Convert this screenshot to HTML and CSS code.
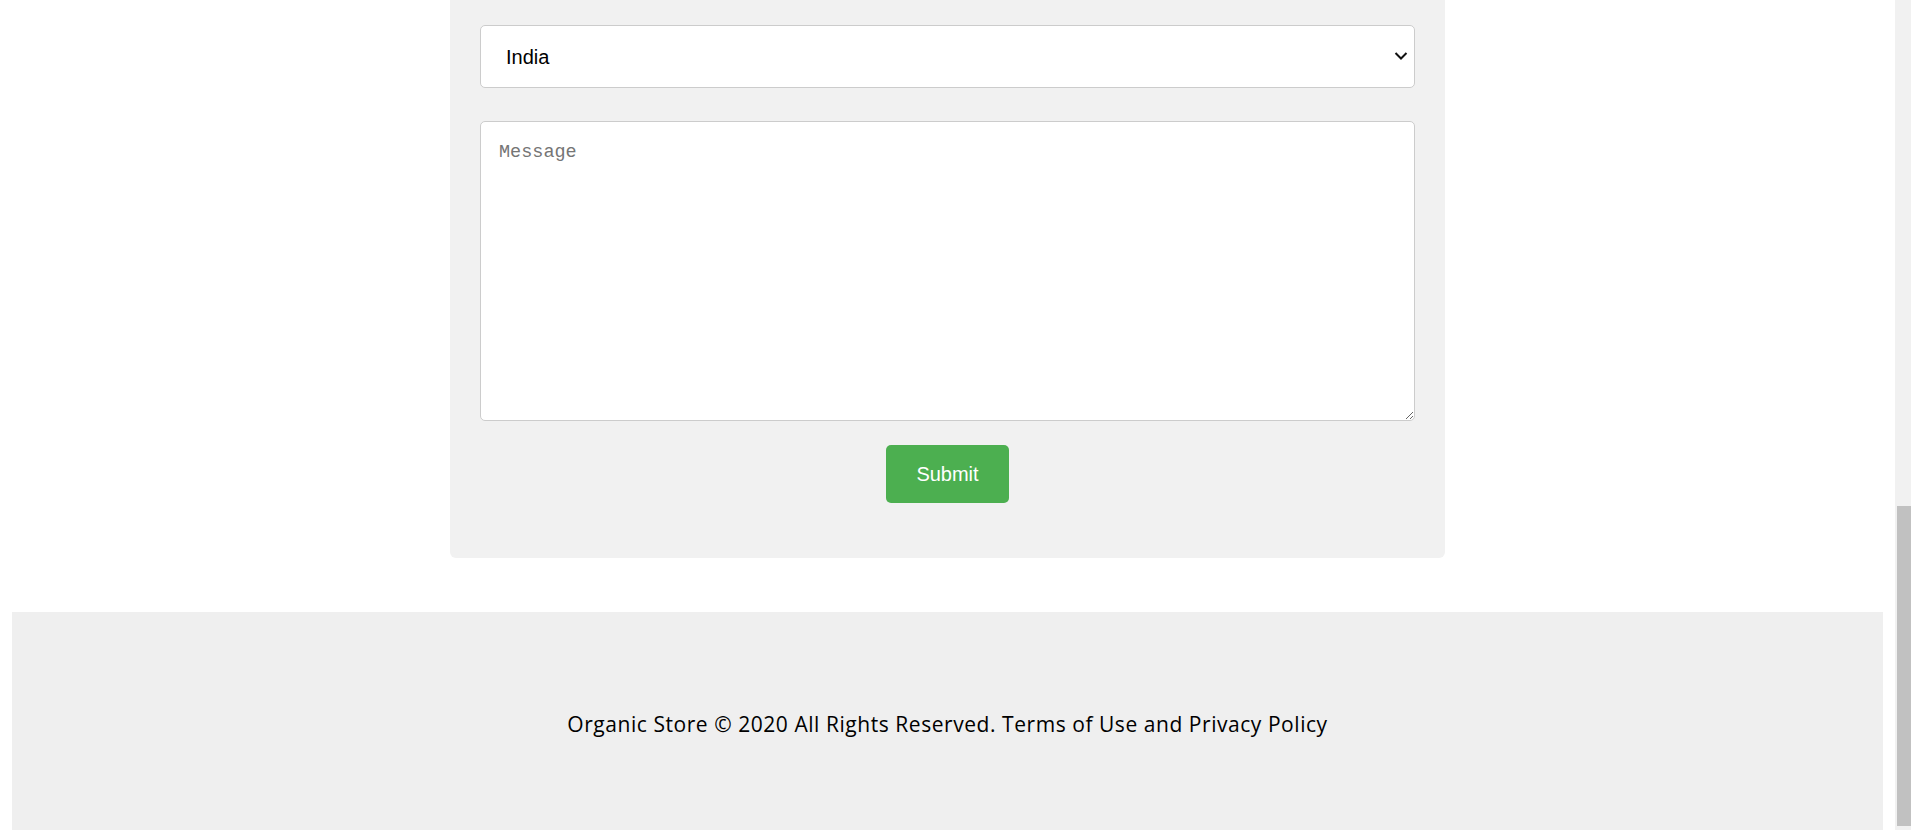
FILE: index.html
```html
<!DOCTYPE html>
<html lang="en">
<head>
<meta charset="utf-8">
<title>Contact - Organic Store</title>
<link rel="stylesheet" href="styles.css">
</head>
<body>
<div class="page">
  <main class="contact">
    <form class="card">
      <div class="select-wrap">
        <select class="field select">
          <option>India</option>
          <option>United States</option>
          <option>United Kingdom</option>
        </select>
        <svg class="chevron" width="14" height="10" viewBox="0 0 14 10" aria-hidden="true">
          <path d="M1.5 2 L7 7.5 L12.5 2" fill="none" stroke="#111" stroke-width="2"/>
        </svg>
      </div>
      <textarea class="field message" placeholder="Message"></textarea>
      <div class="actions">
        <button class="submit" type="button">Submit</button>
      </div>
    </form>
  </main>
  <footer class="footer">
    <p class="footer-text">Organic Store © 2020 All Rights Reserved. Terms of Use and Privacy Policy</p>
  </footer>
</div>
<div class="scrollbar" aria-hidden="true"><div class="thumb"></div></div>
</body>
</html>
```
FILE: styles.css
```css
html, body {
  margin: 0;
  padding: 0;
  background: #ffffff;
  height: 830px;
  overflow: hidden;
}
body {
  font-family: "Liberation Sans", Arial, sans-serif;
  color: #000;
}
.page {
  width: 1895px;
  height: 830px;
  display: flex;
  flex-direction: column;
}
.contact {
  padding: 0 0 54px;
  display: flex;
  justify-content: center;
}
.card {
  box-sizing: border-box;
  width: 995px;
  background: #f1f1f1;
  border-radius: 0 0 6px 6px;
  padding: 25px 30px 55px;
  display: flex;
  flex-direction: column;
}
.field {
  box-sizing: border-box;
  width: 100%;
  border: 1px solid #cccccc;
  border-radius: 5px;
  background: #ffffff;
  font-family: "Liberation Sans", Arial, sans-serif;
  font-size: 20px;
  color: #000;
}
.select-wrap {
  position: relative;
  margin: 0 0 33px;
}
.select {
  display: block;
  height: 63px;
  padding: 0 40px 0 25px;
  -webkit-appearance: none;
  appearance: none;
}
.chevron {
  position: absolute;
  top: 26px;
  right: 7px;
}
.message {
  display: block;
  height: 300px;
  margin: 0 0 24px;
  padding: 20px 18px;
  font-family: "Liberation Mono", "DejaVu Sans Mono", monospace;
  font-size: 18.5px;
  resize: vertical;
}
.message::placeholder {
  color: #757575;
}
.actions {
  display: flex;
  justify-content: center;
}
.submit {
  width: 123px;
  height: 58px;
  border: none;
  border-radius: 5px;
  background: #4caf50;
  color: #ffffff;
  font-family: "Liberation Sans", Arial, sans-serif;
  font-size: 20px;
  cursor: pointer;
}
.footer {
  margin: 0 12px;
  flex: 1;
  background: #efefef;
  display: flex;
  align-items: center;
  justify-content: center;
}
.footer-text {
  margin: 0 0 0 0;
  padding-top: 5px;
  font-family: "Open Sans", "Noto Sans", sans-serif;
  font-size: 21px;
  letter-spacing: 0.55px;
  color: #000;
}
.scrollbar {
  position: fixed;
  top: 0;
  right: 0;
  width: 16px;
  height: 830px;
  background: #f1f1f1;
}
.thumb {
  position: absolute;
  left: 2px;
  right: 0;
  top: 506px;
  bottom: 4px;
  background: #c1c1c1;
}
```
